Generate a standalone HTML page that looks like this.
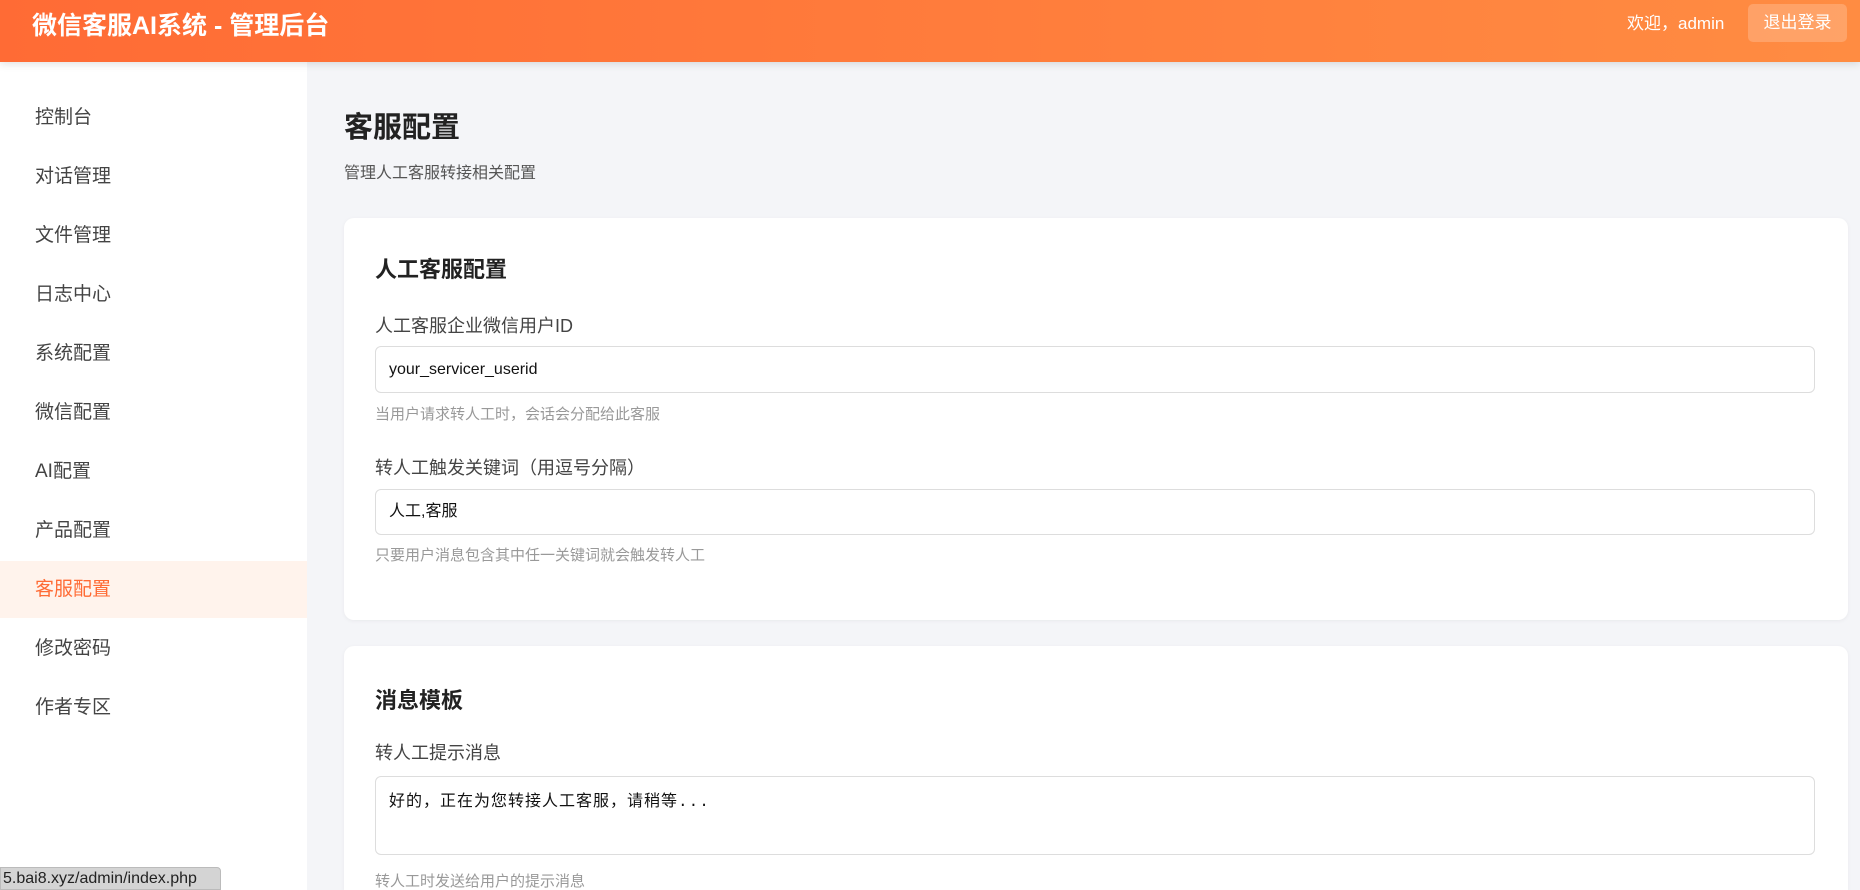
<!DOCTYPE html>
<html><head><meta charset="utf-8"><style>
*{margin:0;padding:0;box-sizing:border-box}
html{width:1860px;height:890px;overflow:hidden}
body{width:1860px;height:890px;overflow:hidden;background:#f4f5f8;font-family:"Liberation Sans","Noto Sans CJK SC",sans-serif;color:#333;position:relative}
.hd{position:absolute;left:0;top:0;width:1860px;height:62px;background:linear-gradient(90deg,#ff6b35,#ff8c42);box-shadow:0 2px 8px rgba(0,0,0,.12);z-index:2}
.hd h1{position:absolute;left:32px;top:9px;font-size:25px;font-weight:bold;color:#fff;line-height:34px}
.hd .w{position:absolute;left:1627px;top:12px;font-size:17px;color:#fff;line-height:24px}
.hd .b{position:absolute;left:1748px;top:4px;width:99px;height:38px;background:rgba(255,255,255,.2);border-radius:5px;color:#fff;font-size:17px;text-align:center;line-height:38px}
.sb{position:absolute;left:0;top:62px;width:307px;height:828px;background:#fff}
.sb div{position:absolute;left:0;width:307px;height:57px;line-height:57px;padding-left:35px;font-size:19px;color:#444}
.sb .a{background:#fff3ec;color:#ff6b35}
.t{position:absolute;left:344px;top:104px;font-size:29px;font-weight:bold;color:#222}
.st{position:absolute;left:344px;top:159px;font-size:16px;color:#555}
.card{position:absolute;left:344px;width:1504px;background:#fff;border-radius:10px;box-shadow:0 1px 4px rgba(0,0,0,.05)}
.ct{position:absolute;left:31px;font-size:22px;font-weight:bold;color:#222}
.lb{position:absolute;left:31px;font-size:18px;color:#444}
.in{position:absolute;left:31px;width:1440px;border:1px solid #ddd;border-radius:6px;font-size:16px;color:#111;padding-left:13px}
.hp{position:absolute;left:31px;font-size:15px;color:#999}
.stb{position:absolute;left:0;top:867px;width:221px;height:23px;background:#d4d4d4;border:1px solid #bbb;border-radius:0 4px 0 0;font-size:16px;line-height:22px;color:#222;padding-left:2px;z-index:3}
</style></head><body>
<div class="hd"><h1>微信客服AI系统 - 管理后台</h1><div class="w">欢迎，admin</div><div class="b">退出登录</div></div>
<div class="sb">
<div style="top:27px">控制台</div><div style="top:86px">对话管理</div><div style="top:145px">文件管理</div><div style="top:204px">日志中心</div><div style="top:263px">系统配置</div><div style="top:322px">微信配置</div><div style="top:381px">AI配置</div><div style="top:440px">产品配置</div><div class="a" style="top:499px">客服配置</div><div style="top:558px">修改密码</div><div style="top:617px">作者专区</div>
</div>
<div class="t">客服配置</div>
<div class="st">管理人工客服转接相关配置</div>
<div class="card" style="top:218px;height:402px">
<div class="ct" style="top:34px">人工客服配置</div>
<div class="lb" style="top:94px">人工客服企业微信用户ID</div>
<div class="in" style="top:128px;height:47px;line-height:45px">your_servicer_userid</div>
<div class="hp" style="top:185px">当用户请求转人工时，会话会分配给此客服</div>
<div class="lb" style="top:236px">转人工触发关键词（用逗号分隔）</div>
<div class="in" style="top:271px;height:46px;line-height:44px">人工,客服</div>
<div class="hp" style="top:326px">只要用户消息包含其中任一关键词就会触发转人工</div>
</div>
<div class="card" style="top:646px;height:244px;border-radius:10px 10px 0 0">
<div class="ct" style="top:37px">消息模板</div>
<div class="lb" style="top:93px">转人工提示消息</div>
<div class="in" style="top:130px;height:79px;padding-top:10px;font-family:'WenQuanYi Zen Hei','Liberation Mono',monospace;font-size:16px;letter-spacing:1px">好的，正在为您转接人工客服，请稍等...</div>
<div class="hp" style="top:224px">转人工时发送给用户的提示消息</div>
</div>
<div class="stb">5.bai8.xyz/admin/index.php</div>
</body></html>
